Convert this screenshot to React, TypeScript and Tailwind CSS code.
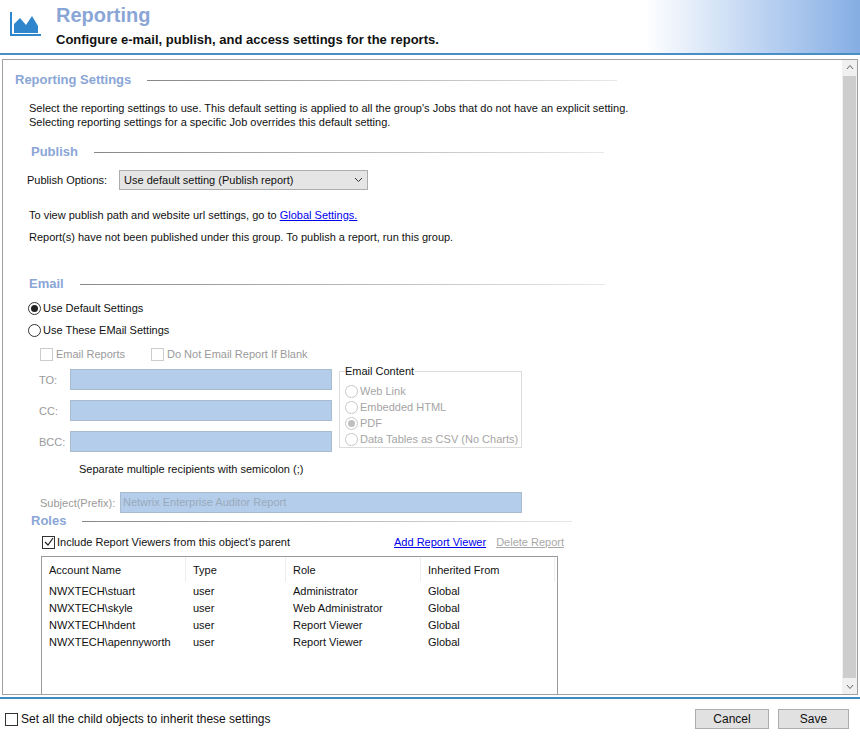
import React from "react";

const H = ({ children, line }: { children: React.ReactNode; line: string }) => (
  <div className="flex items-center h-[16px]">
    <span className="text-[13px] leading-[16px] font-bold text-[#8aa6d6]">{children}</span>
    <div className={`ml-4 h-px bg-gradient-to-r from-[#888] to-[#e8e8e8] ${line}`} />
  </div>
);

const Radio = ({ on, dim }: { on?: boolean; dim?: boolean }) => (
  <span className={`inline-flex w-[13px] h-[13px] rounded-full border items-center justify-center bg-white ${dim ? "border-[#c8c8c8]" : "border-[#333]"}`}>
    {on && <span className={`w-[7px] h-[7px] rounded-full ${dim ? "bg-[#c0c0c0]" : "bg-[#222]"}`} />}
  </span>
);

const Box = ({ checked, dim }: { checked?: boolean; dim?: boolean }) => (
  <span className={`inline-flex w-[13px] h-[13px] border items-center justify-center bg-white ${dim ? "border-[#ccc]" : "border-[#333]"}`}>
    {checked && (
      <svg width="10" height="10" viewBox="0 0 10 10"><path d="M1 5 L4 8 L9 1" fill="none" stroke="#222" strokeWidth="1.2" /></svg>
    )}
  </span>
);

const rows = [
  ["NWXTECH\\stuart", "user", "Administrator", "Global"],
  ["NWXTECH\\skyle", "user", "Web Administrator", "Global"],
  ["NWXTECH\\hdent", "user", "Report Viewer", "Global"],
  ["NWXTECH\\apennyworth", "user", "Report Viewer", "Global"],
];

const cols = ["w-[144px]", "w-[100px]", "w-[135px]", "w-[134px]"];

export default function App() {
  return (
    <div className="w-[860px] h-[739px] bg-white text-[11px] leading-[14px] text-[#111] flex flex-col overflow-hidden" style={{ fontFamily: "'Liberation Sans', Arial, sans-serif" }}>
      {/* header */}
      <header className="h-[55px] shrink-0 flex relative bg-gradient-to-r from-white from-75% to-[#86aee4] border-b-2 border-[#4a8fc4]">
        <svg className="ml-[10px] mt-[12px]" width="32" height="24" viewBox="0 0 32 24">
          <path d="M1 0 V23 H31" fill="none" stroke="#2f86cc" strokeWidth="2" />
          <path d="M4 21 V12 L10 6 L16 13 L22 4 L28 14 V21 Z" fill="#2f86cc" />
        </svg>
        <div className="ml-[14px]">
          <div className="text-[20px] font-bold text-[#8aa6d6] leading-none mt-[5px]">Reporting</div>
          <div className="text-[13px] leading-[16px] font-bold mt-[7px]">Configure e-mail, publish, and access settings for the reports.</div>
        </div>
      </header>

      {/* panel */}
      <div className="mt-[4px] mx-[2px] h-[636px] shrink-0 border border-[#a0a0a0] flex overflow-hidden">
        <div className="flex-1 pl-[12px] pt-[12px]">
          <H line="w-[470px]">Reporting Settings</H>
          <p className="ml-[14px] mt-[13px]">
            Select the reporting settings to use. This default setting is applied to all the group's Jobs that do not have an explicit setting.<br />
            Selecting reporting settings for a specific Job overrides this default setting.
          </p>
          <div className="ml-[16px] mt-[15px]"><H line="w-[510px]">Publish</H></div>
          <div className="ml-[12px] mt-[10px] flex items-center gap-[12px]">
            <span>Publish Options:</span>
            <div className="w-[249px] h-[20px] border border-[#adadad] bg-[#e5e5e5] flex items-center justify-between px-[4px]">
              <span>Use default setting (Publish report)</span>
              <svg width="9" height="6" viewBox="0 0 9 6"><path d="M1 1 L4.5 4.5 L8 1" fill="none" stroke="#333" /></svg>
            </div>
          </div>
          <p className="ml-[14px] mt-[18px]">To view publish path and website url settings, go to <span className="text-[#0000ee] underline">Global Settings.</span></p>
          <p className="ml-[14px] mt-[8px]">Report(s) have not been published under this group. To publish a report, run this group.</p>

          <div className="ml-[14px] mt-[32px]"><H line="w-[525px]">Email</H></div>
          <div className="ml-[13px] mt-[9px] flex items-center gap-[2px]"><Radio on /><span>Use Default Settings</span></div>
          <div className="ml-[13px] mt-[8px] flex items-center gap-[2px]"><Radio /><span>Use These EMail Settings</span></div>
          <div className="ml-[25px] mt-[10px] flex items-center text-[#9a9a9a]">
            <Box dim /><span className="ml-[3px] w-[95px]">Email Reports</span>
            <Box dim /><span className="ml-[3px]">Do Not Email Report If Blank</span>
          </div>
          <div className="flex mt-[8px]">
            <div className="flex flex-col gap-[10px] ml-[24px] text-[#9a9a9a]">
              {["TO:", "CC:", "BCC:"].map((l) => (
                <div key={l} className="flex items-center">
                  <span className="w-[31px]">{l}</span>
                  <div className="w-[262px] h-[21px] bg-[#b4cdea] border border-[#a9bccf]" />
                </div>
              ))}
            </div>
            <div className="ml-[7px] mt-[2px] w-[183px] h-[77px] border border-[#dcdcdc] relative pl-[5px] pt-[11px] text-[#a5a5a5]">
              <span className="absolute -top-[8px] left-[5px] bg-white pr-[1px] text-[#111]">Email Content</span>
              {["Web Link", "Embedded HTML", "PDF", "Data Tables as CSV (No Charts)"].map((t, i) => (
                <div key={t} className="flex items-center gap-[2px] h-[16px]"><Radio dim on={i === 2} />{t}</div>
              ))}
            </div>
          </div>
          <p className="ml-[64px] mt-[10px]">Separate multiple recipients with semicolon (;)</p>
          <div className="ml-[25px] mt-[16px] flex items-center text-[#9a9a9a]">
            <span className="w-[80px]">Subject(Prefix):</span>
            <div className="w-[402px] h-[21px] bg-[#b4cdea] border border-[#a9bccf] px-[2px] leading-[19px] text-[#9ab]">Netwrix Enterprise Auditor Report</div>
          </div>
          <div className="ml-[16px]"><H line="w-[490px]">Roles</H></div>
          <div className="ml-[27px] mt-[6px] w-[522px] flex items-center">
            <Box checked /><span className="ml-[2px] flex-1">Include Report Viewers from this object's parent</span>
            <span className="text-[#0000ee] underline">Add Report Viewer</span>
            <span className="ml-[10px] text-[#a8a8a8] underline">Delete Report</span>
          </div>
          <div className="ml-[26px] mt-[7px] w-[517px] h-[150px] border border-[#9a9a9a] border-b-0">
            <div className="flex h-[25px] items-center">
              {["Account Name", "Type", "Role", "Inherited From"].map((c, i) => (
                <span key={c} className={`${cols[i]} pl-[7px] h-full flex items-center border-r border-[#eee]`}>{c}</span>
              ))}
            </div>
            {rows.map((r) => (
              <div key={r[0]} className="flex h-[17px] items-center">
                {r.map((c, i) => (
                  <span key={i} className={`${cols[i]} pl-[7px]`}>{c}</span>
                ))}
              </div>
            ))}
          </div>
        </div>
        {/* scrollbar */}
        <div className="w-[15px] bg-[#f0f0f0] flex flex-col items-center">
          <svg className="mt-[4px]" width="8" height="6" viewBox="0 0 8 6"><path d="M1 5 L4 1.5 L7 5" fill="none" stroke="#666" /></svg>
          <div className="w-[13px] flex-1 bg-[#cdcdcd] my-[6px]" />
          <svg className="mb-[4px]" width="8" height="6" viewBox="0 0 8 6"><path d="M1 1 L4 4.5 L7 1" fill="none" stroke="#666" /></svg>
        </div>
      </div>

      {/* footer */}
      <footer className="mt-[2px] border-t-2 border-[#3d8bc0] flex-1 flex items-center px-[5px]">
        <Box /><span className="ml-[3px] text-[12px] flex-1">Set all the child objects to inherit these settings</span>
        <button className="w-[74px] h-[20px] bg-[#e1e1e1] border border-[#adadad] text-[12px]">Cancel</button>
        <button className="ml-[9px] mr-[6px] w-[71px] h-[20px] bg-[#e1e1e1] border border-[#adadad] text-[12px]">Save</button>
      </footer>
    </div>
  );
}
